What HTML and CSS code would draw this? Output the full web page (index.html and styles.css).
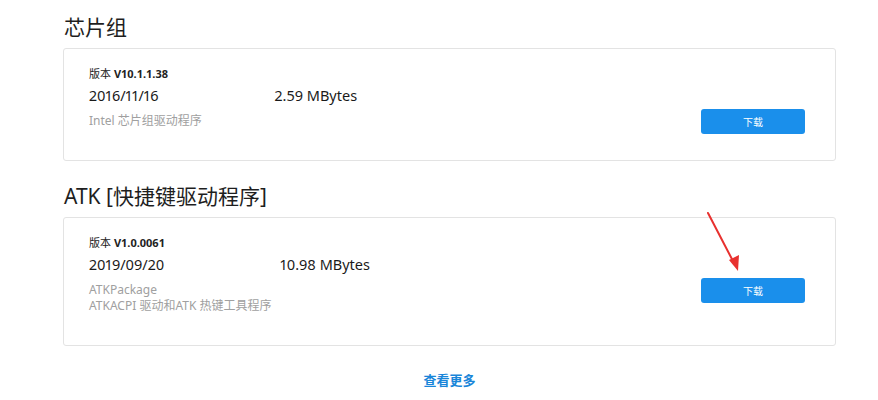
FILE: index.html
```html
<!DOCTYPE html>
<html lang="zh-CN">
<head>
<meta charset="utf-8">
<link rel="stylesheet" href="styles.css">
</head>
<body>
<div class="page">
  <h2 class="section-title">芯片组</h2>
  <div class="card">
    <div class="info">
      <div class="version">版本 <b>V10.1.1.38</b></div>
      <div class="meta"><span class="date">2016/11/16</span><span class="size">2.59 MBytes</span></div>
      <div class="desc">Intel 芯片组驱动程序</div>
    </div>
    <button class="btn">下载</button>
  </div>

  <h2 class="section-title second">ATK [快捷键驱动程序]</h2>
  <div class="card">
    <div class="info">
      <div class="version">版本 <b>V1.0.0061</b></div>
      <div class="meta"><span class="date">2019/09/20</span><span class="size">10.98 MBytes</span></div>
      <div class="desc">ATKPackage<br>ATKACPI 驱动和ATK 热键工具程序</div>
    </div>
    <button class="btn">下载</button>
  </div>

  <div class="more-row"><a class="more">查看更多</a></div>

  <svg class="arrow" width="50" height="70" viewBox="0 0 50 70">
    <line x1="3" y1="2" x2="29" y2="52" stroke="#e8312f" stroke-width="2" stroke-linecap="round"/>
    <polygon points="24,49 34,44 33,60" fill="#e8312f"/>
  </svg>
</div>
</body>
</html>
```
FILE: styles.css
```css
* { box-sizing: border-box; }
html, body { margin: 0; padding: 0; background: #fff; }
body {
  font-family: "Noto Sans", "Noto Sans CJK SC", sans-serif;
  color: #222;
}
.page {
  position: relative;
  width: 773px;
  margin-left: 63px;
  padding-top: 12px;
}
.section-title {
  margin: 0 0 6px 1px;
  font-size: 21px;
  font-weight: 400;
  line-height: 30px;
  color: #1e1e1e;
}
.section-title.second {
  margin-top: 20px;
}
.card {
  display: flex;
  justify-content: space-between;
  align-items: flex-start;
  border: 1px solid #e3e3e3;
  border-radius: 3px;
  padding: 17px 30px 31px 25px;
}
.version {
  font-size: 11px;
  line-height: 16px;
  color: #222;
}
.version b { font-weight: 700; }
.meta {
  display: flex;
  margin-top: 2px;
  font-size: 14.5px;
  line-height: 22px;
  color: #1a1a1a;
  font-variant-numeric: proportional-nums;
}
.size { margin-left: 116px; }
.desc {
  margin-top: 7px;
  font-size: 12px;
  line-height: 16px;
  color: #a0a0a0;
}
.btn {
  margin-top: 43px;
  margin-bottom: -10px;
  width: 104px;
  height: 25px;
  border: 0;
  border-radius: 3px;
  background: #1a8feb;
  color: #fff;
  font-family: "Noto Sans CJK SC", sans-serif;
  font-size: 10px;
  cursor: pointer;
}
.more-row {
  display: flex;
  justify-content: center;
  padding-top: 25px;
}
.more {
  font-size: 13px;
  font-weight: 700;
  color: #1a86d9;
  line-height: 18px;
}
.arrow {
  position: absolute;
  left: 642px;
  top: 211px;
}
```
